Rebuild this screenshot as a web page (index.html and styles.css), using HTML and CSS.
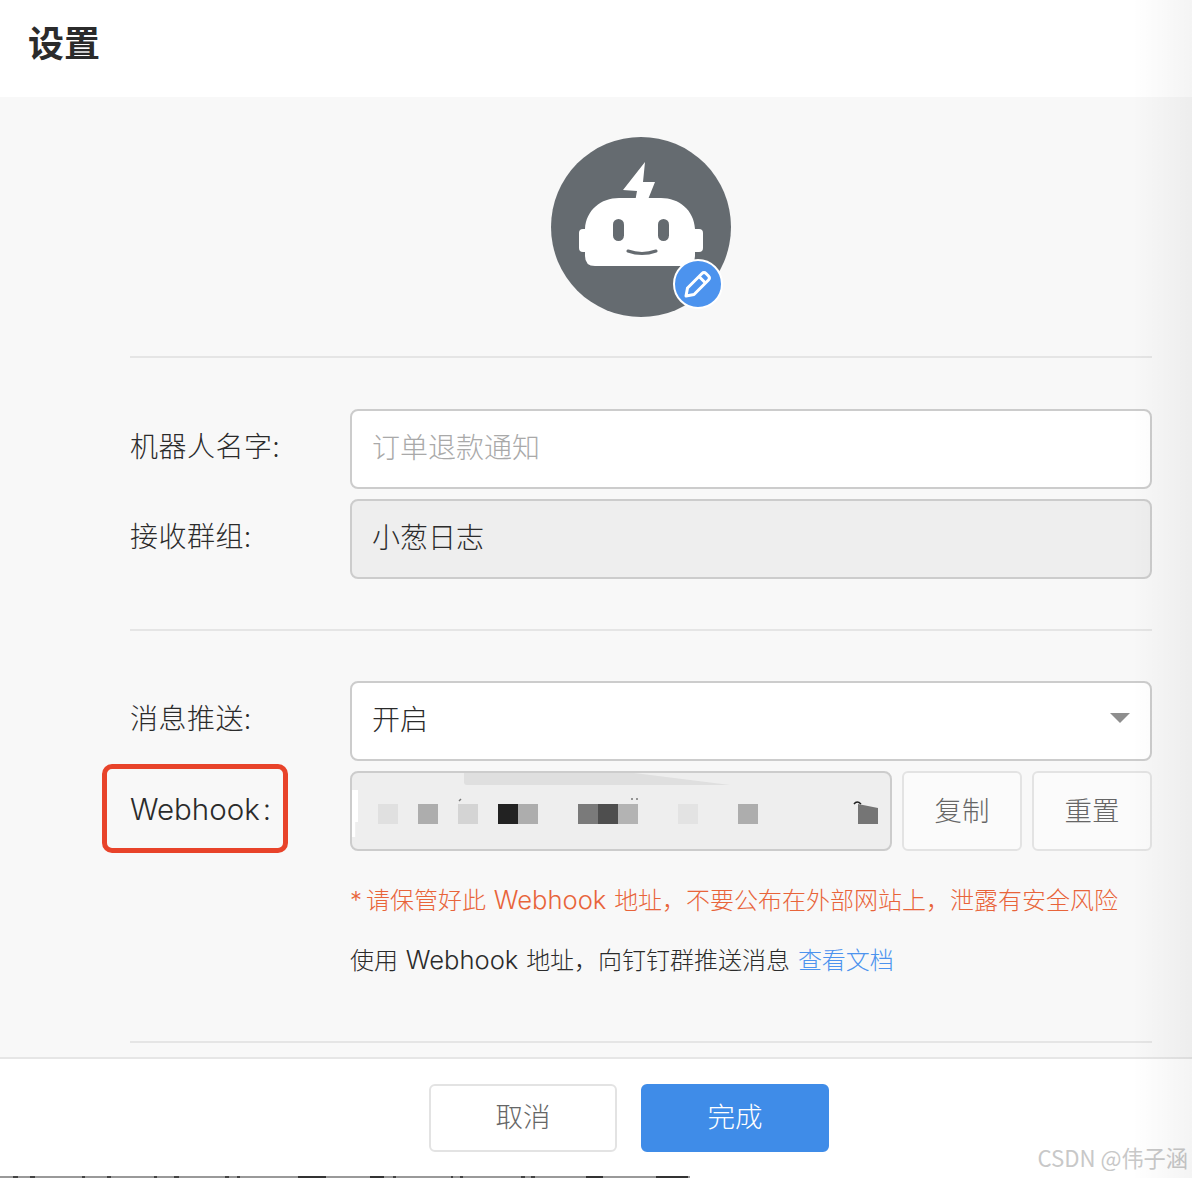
FILE: index.html
```html
<!DOCTYPE html>
<html lang="zh">
<head>
<meta charset="utf-8">
<title>设置</title>
<link rel="stylesheet" href="styles.css">
</head>
<body>
<div class="page">
  <header class="top"><h1 class="title">设置</h1></header>
  <main class="body">
    <div class="avatar-row">
      <div class="avatar">
        <svg class="bot" viewBox="0 0 180 180" width="180" height="180" aria-hidden="true">
          <circle cx="90" cy="90" r="90" fill="#656b70"/>
          <path fill="#fff" d="M94 25 L72 53 L86 54 L84 65 L96 65 L104 45 L92 45 Z"/>
          <path fill="#fff" d="M34 92 C35 73 50 61 68 61 H110 C128 61 143 73 144 92 H148 Q152 92 152 96 V111 Q152 115 148 115 H144 V119 Q144 129 134 129 H44 Q34 129 34 119 V115 H32 Q28 115 28 111 V96 Q28 92 32 92 Z"/>
          <rect x="62" y="82" width="11" height="22" rx="5.5" fill="#656b70"/>
          <rect x="107" y="82" width="11" height="22" rx="5.5" fill="#656b70"/>
          <path d="M77 114 Q91 119 105 114" fill="none" stroke="#656b70" stroke-width="3" stroke-linecap="round"/>
        </svg>
        <span class="badge">
          <svg viewBox="0 0 46 46" width="46" height="46" aria-hidden="true">
            <path fill="none" stroke="#fff" stroke-width="3" stroke-linejoin="round" d="M11 35 L12.5 27 L27 12.5 Q29 10.5 31 12.5 L33.5 15 Q35.5 17 33.5 19 L19 33.5 Z"/>
            <path fill="none" stroke="#fff" stroke-width="3" d="M24 15.5 L30.5 22"/>
          </svg>
        </span>
      </div>
    </div>
    <hr class="rule rule-a">
    <div class="row">
      <label class="label">机器人名字:</label>
      <div class="field field-input placeholder">订单退款通知</div>
    </div>
    <div class="row">
      <label class="label">接收群组:</label>
      <div class="field field-off">小葱日志</div>
    </div>
    <hr class="rule rule-b">
    <div class="row">
      <label class="label">消息推送:</label>
      <div class="field field-input field-select">开启<span class="caret"></span></div>
    </div>
    <div class="row">
      <label class="label label-hook">Webhook<span class="colon">:</span><span class="mark"></span></label>
      <div class="hook">
        <div class="field field-off field-mask">
          <span class="smear-top"></span>
          <span class="smear-left"></span>
          <div class="cells">
            <i class="c1"></i><i></i><i class="c2"></i><i></i><i class="c3"></i><i></i><i class="c4"></i><i class="c2"></i><i></i><i></i><i class="c5"></i><i class="c6"></i><i class="c7"></i><i></i><i></i><i class="c8"></i><i></i><i></i><i class="c2"></i><i></i><i></i><i></i><i></i><i></i><i class="c9"></i>
          </div>
          <svg class="specks" viewBox="0 0 538 76" width="538" height="76" aria-hidden="true">
            <path d="M107 28 l2 -2" stroke="#777" stroke-width="1.5" fill="none"/>
            <path d="M279 26 h2 M284 26 h2" stroke="#777" stroke-width="1.5" fill="none"/>
            <path d="M502 31 Q505 27 509 31" stroke="#222" stroke-width="1.5" fill="none"/>
          </svg>
        </div>
        <button class="btn btn-side" type="button">复制</button>
        <button class="btn btn-side" type="button">重置</button>
      </div>
    </div>
    <div class="notes">
      <p class="warn"><span class="star">*</span>请保管好此 <span class="lat">Webhook</span> 地址，不要公布在外部网站上，泄露有安全风险</p>
      <p class="info">使用 <span class="lat">Webhook</span> 地址，向钉钉群推送消息 <a class="doc" href="#">查看文档</a></p>
    </div>
    <hr class="rule rule-c">
  </main>
  <footer class="foot">
    <button class="btn btn-foot" type="button">取消</button>
    <button class="btn btn-foot btn-primary" type="button">完成</button>
    <span class="stamp">CSDN @伟子涵</span>
  </footer>
  <div class="edge"></div>
  <div class="cut"></div>
</div>
</body>
</html>
```
FILE: styles.css
```css
* { box-sizing: border-box; }
html, body { margin: 0; padding: 0; }
body {
  font-family: "Inter", "Noto Sans CJK SC", sans-serif;
  color: #2b2b2b;
  background: #fff;
}
.page {
  position: relative;
  width: 1192px;
  height: 1178px;
  overflow: hidden;
  background: #fff;
  display: flex;
  flex-direction: column;
}
.top {
  height: 97px;
  flex: none;
  padding: 19px 0 0 28px;
  background: #fff;
}
.title {
  margin: 0;
  font: 700 36px/44px "Noto Sans CJK SC", sans-serif;
  color: #2b2b2b;
}
.body {
  flex: none;
  height: 960px;
  padding: 40px 40px 0 130px;
  background: #f8f8f8;
}
.avatar-row { display: flex; justify-content: center; }
.avatar { position: relative; width: 180px; height: 180px; }
.bot { display: block; }
.badge {
  position: absolute;
  left: 122px;
  top: 122px;
  width: 50px;
  height: 50px;
  border: 2px solid #fff;
  border-radius: 50%;
  background: #4c93ee;
}
.badge svg { display: block; }
.rule {
  margin: 0;
  height: 2px;
  border: 0;
  background: #e5e5e5;
}
.rule-a { margin: 39px 0 51px; }
.rule-b { margin: 50px 0 50px; }
.rule-c { margin-top: 62px; }
.row {
  display: flex;
  align-items: center;
  height: 80px;
  margin-bottom: 10px;
}
.label {
  flex: none;
  width: 220px;
  margin-top: -8px;
  font: 300 28px/40px "Noto Sans CJK SC", sans-serif;
  letter-spacing: 0.5px;
  color: #2b2b2b;
}
.label-hook {
  position: relative;
  margin-top: -4px;
  font-family: "Inter", "Noto Sans CJK SC", sans-serif;
  font-size: 29.5px;
  font-weight: 300;
  letter-spacing: 0;
}
.colon { margin-left: 3px; }
.mark {
  position: absolute;
  left: -28px;
  top: -25px;
  width: 186px;
  height: 89px;
  border: 5px solid #e8432a;
  border-radius: 10px;
}
.field {
  position: relative;
  flex: 1;
  height: 80px;
  padding: 0 20px 6px;
  display: flex;
  align-items: center;
  border: 2px solid #ccc;
  border-radius: 8px;
  font: 300 28px/40px "Noto Sans CJK SC", sans-serif;
  color: #2b2b2b;
}
.field-input { background: #fff; }
.placeholder { color: #a9a9a9; }
.field-off { background: #eee; }
.field-select { padding-bottom: 7px; }
.caret {
  position: absolute;
  right: 20px;
  top: 30px;
  width: 0;
  height: 0;
  border-left: 10px solid transparent;
  border-right: 10px solid transparent;
  border-top: 10px solid #8e8e8e;
}
.hook {
  flex: 1;
  display: flex;
  gap: 10px;
  height: 80px;
}
.field-mask { flex: none; width: 542px; padding: 0; overflow: hidden; }
.smear-top {
  position: absolute;
  left: 112px;
  top: 0;
  width: 266px;
  height: 12px;
  background: #dfdfdf;
  border-radius: 0 0 0 3px;
  clip-path: polygon(0 0, 64% 0, 100% 100%, 0 100%);
}
.smear-left {
  position: absolute;
  left: -2px;
  top: 17px;
  width: 8px;
  height: 47px;
  background: #fff;
  clip-path: polygon(0 0, 100% 0, 100% 68%, 65% 68%, 65% 100%, 0 100%);
}
.cells {
  position: absolute;
  left: 26px;
  top: 31px;
  display: grid;
  grid-template-columns: repeat(25, 20px);
  grid-auto-rows: 20px;
}
.specks { position: absolute; left: 0; top: 0; }
.c1 { background: #e0e0e0; }
.c2 { background: #adadad; }
.c3 { background: #d4d4d4; }
.c4 { background: #222; }
.c5 { background: #7a7a7a; }
.c6 { background: #4e4e4e; }
.c7 { background: #b3b3b3; }
.c8 { background: #e3e3e3; }
.c9 { background: #757575; clip-path: polygon(0 0, 100% 20%, 100% 100%, 0 100%); }
.btn {
  border: 2px solid #e3e3e3;
  border-radius: 6px;
  background: #fff;
  color: #666;
  font: 300 27.5px/36px "Noto Sans CJK SC", sans-serif;
  padding: 0 0 5px;
  cursor: pointer;
}
.btn-side { flex: none; width: 120px; height: 80px; background: #fbfbfb; }
.notes { margin: 31px 0 0 220px; }
.warn {
  margin: 0;
  font: 300 24px/36px "Inter", "Noto Sans CJK SC", sans-serif;
  word-spacing: 1px;
  color: #e8643a;
}
.info {
  margin: 23px 0 0;
  font: 300 24px/36px "Inter", "Noto Sans CJK SC", sans-serif;
  word-spacing: 1px;
  color: #2b2b2b;
}
.star { display: inline-block; width: 16px; }
.lat { font-size: 25.6px; }
.doc { color: #4c93ee; text-decoration: none; }
.foot {
  position: relative;
  flex: none;
  height: 121px;
  border-top: 2px solid #e6e6e6;
  padding: 25px 0 0 66px;
  display: flex;
  justify-content: center;
  align-items: flex-start;
  gap: 24px;
  background: #fff;
}
.btn-foot { width: 188px; height: 68px; padding-bottom: 7px; }
.btn-primary { background: #3f8ce8; border-color: #3f8ce8; color: #fff; }
.stamp {
  position: absolute;
  right: 4px;
  top: 82px;
  font: 400 22.2px/32px "Noto Sans CJK SC", sans-serif;
  color: #c8c8c8;
}
.edge {
  position: absolute;
  right: 0;
  top: 0;
  width: 60px;
  height: 100%;
  background: linear-gradient(to right, rgba(0,0,0,0), rgba(0,0,0,0.045));
  pointer-events: none;
}
.cut {
  position: absolute;
  left: 0;
  bottom: 0;
  width: 690px;
  height: 2px;
  background: linear-gradient(to right,
    #999 13px, #444 13px 18px, #999 18px 30px, #444 30px 35px, #999 35px 82px, #444 82px 85px,
    #999 85px 107px, #444 107px 111px, #999 111px 154px, #444 154px 157px, #999 157px 174px,
    #444 174px 179px, #999 179px 225px, #444 225px 229px, #999 229px 237px, #444 237px 240px,
    #999 240px 298px, #333 298px 326px, #999 326px 370px, #333 370px 384px, #999 384px 393px,
    #444 393px 396px, #999 396px 451px, #444 451px 453px, #999 453px 460px, #444 460px 463px,
    #999 463px 521px, #444 521px 525px, #999 525px 531px, #444 531px 535px, #999 535px 586px,
    #333 586px 603px, #999 603px 656px, #333 656px 688px, #999 688px);
}
```
